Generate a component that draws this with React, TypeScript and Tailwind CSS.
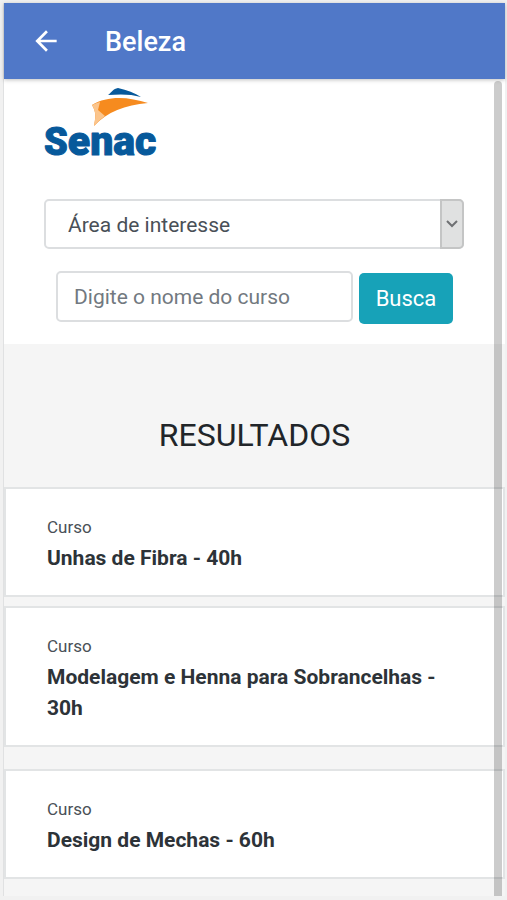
const courses = [
  { title: "Unhas de Fibra - 40h", spacing: "mb-[9px]" },
  { title: "Modelagem e Henna para Sobrancelhas - 30h", spacing: "mb-[22px]" },
  { title: "Design de Mechas - 60h", spacing: "" },
];

function SenacLogo() {
  return (
    <svg viewBox="0 0 120 74" className="block h-[74px] w-[120px] overflow-visible" role="img" aria-label="Senac">
      <path d="M64 8 C68 5 69 2 74 1 C83 3 91 6 97 10 C87 7 76 7 64 8Z" fill="#07599b" />
      <path d="M48 18 C64 8 85 10 104 16 C81 18 63 25 50 39 C51 32 53 26 48 18Z" fill="#f68b1f" />
      <path d="M48 18 Q52 16 56 15 L54 23 L61 29 Q54 34 50 39 C51 32 53 26 48 18Z" fill="#fbc58c" />
      <text
        x="0"
        y="68"
        className="fill-[#07599b] stroke-[#07599b] font-['Roboto',sans-serif] text-[41px] font-black"
        strokeWidth="1"
        strokeLinejoin="round"
      >
        <tspan className="text-[38px]">S</tspan>enac
      </text>
    </svg>
  );
}

export default function App() {
  return (
    <div className="relative min-h-screen bg-[#f1f1f1] pt-[3px] pr-[2px] pb-1 pl-[3px] font-['Roboto',sans-serif] text-[#212529]">
      <div className="min-h-[893px] border-l border-[#e0e1e2] bg-[#f5f5f5]">
        <header className="relative flex h-[76px] items-center bg-[#5078c8] pl-[27px] text-white shadow-[0_1px_4px_rgba(0,0,0,0.25)]">
          <button type="button" aria-label="Voltar" className="flex size-[30px] items-center justify-center">
            <svg viewBox="0 0 24 24" className="size-8 shrink-0" fill="currentColor" aria-hidden="true">
              <path d="M20 11H7.83l5.59-5.59L12 4l-8 8 8 8 1.41-1.41L7.83 13H20v-2z" />
            </svg>
          </button>
          <h1 className="ml-11 pt-[2px] text-[27px] leading-8 font-medium">Beleza</h1>
        </header>

        <form className="bg-white px-10 pt-2 pb-[21px]" onSubmit={(event) => event.preventDefault()}>
          <SenacLogo />
          <div className="relative mt-[38px] mr-px h-[50px]">
            <select
              aria-label="Área de interesse"
              className="h-full w-full appearance-none rounded-[5px] border-2 border-[#dcdee0] bg-white pt-[3px] pl-[22px] text-[21px] text-[#495057]"
            >
              <option>Área de interesse</option>
            </select>
            <span className="pointer-events-none absolute inset-y-0 right-0 flex w-6 items-center justify-center rounded-r-[5px] border-2 border-[#c4c5c5] bg-[#e0e1e1]">
              <svg viewBox="0 0 14 10" className="h-[10px] w-[14px]" fill="none" stroke="#6f7173" strokeWidth="2" aria-hidden="true">
                <path d="M2 2 7 7 12 2" />
              </svg>
            </span>
          </div>
          <div className="mt-[22px] mr-3 ml-3 flex gap-[6px]">
            <input
              type="text"
              aria-label="Nome do curso"
              placeholder="Digite o nome do curso"
              className="h-[51px] min-w-0 flex-1 rounded-[5px] border-2 border-[#dcdee0] bg-white px-4 text-[21px] placeholder:text-[#727980]"
            />
            <button type="submit" className="mt-[2px] -mb-px h-[51px] w-[94px] rounded-[5px] bg-[#17a2b8] text-[22px] text-white">
              Busca
            </button>
          </div>
        </form>

        <main>
          <h2 className="pt-[71px] pb-[32px] text-center text-[32px] leading-10">RESULTADOS</h2>
          {courses.map((course) => (
            <article
              key={course.title}
              className={`border-2 border-[#e2e4e5] bg-white pt-[26px] pr-[50px] pb-[21px] pl-[41px] ${course.spacing}`}
            >
              <p className="text-[17px] leading-6 text-[#495057]">Curso</p>
              <h3 className="pt-1 text-[21px] leading-[31px] font-bold text-[#2d3338]">{course.title}</h3>
            </article>
          ))}
        </main>
      </div>
      <div aria-hidden="true" className="absolute top-[81px] right-[5px] bottom-1 w-2 rounded-t bg-black/20" />
    </div>
  );
}
